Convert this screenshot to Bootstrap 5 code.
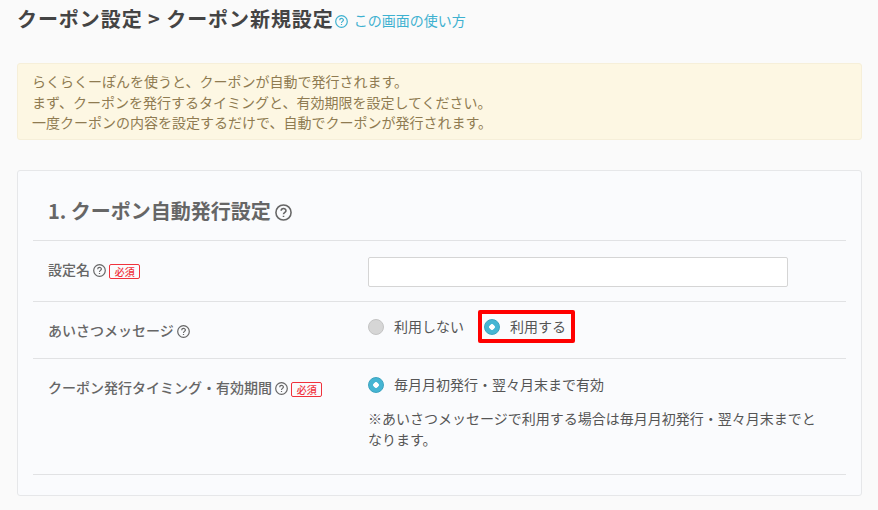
<!DOCTYPE html>
<html lang="ja">
<head>
    <meta charset="UTF-8">
    <title>クーポン設定</title>
    <link href="https://cdn.jsdelivr.net/npm/bootstrap@5.3.0/dist/css/bootstrap.min.css" rel="stylesheet">
    <style>
        html, body { height: 510px; overflow: hidden; }
        body {
            background: #fafafa;
            color: #555;
            font-family: "Noto Sans CJK JP", sans-serif;
            font-size: 14px;
            line-height: 21px;
        }
        .page-wrap { padding: 0 16px 0 17px; }
        .page-head { height: 63px; padding-top: 6px; align-items: flex-start; }
        .page-title { font-size: 20px; line-height: 26px; font-weight: 700; color: #444; letter-spacing: .93px; margin: 0; }
        .help-link { color: #3eb1d0; text-decoration: none; font-size: 14px; line-height: 28px; margin-left: 1px; }
        .help-link svg { margin-right: 6px; vertical-align: -2px; }
        svg { stroke-width: 1.2; }
        .notice-box {
            background: #fdf7e3;
            border: 1px solid #f6efd9;
            border-radius: 3px;
            color: #8f7b51;
            padding: 7px 14px;
            height: 77px;
            margin-bottom: 30px;
            line-height: 20.6px;
        }
        .form-panel {
            background: #fafbfd;
            border: 1px solid #e6e7e9;
            border-radius: 3px;
            padding: 0 15px;
            height: 326px;
        }
        .panel-title { font-size: 20px; line-height: 26px; font-weight: 700; color: #666; margin: 0; padding: 27px 15px 16px; height: 70px; border-bottom: 1px solid #e1e2e4; }
        .form-line { border-bottom: 1px solid #e1e2e4; padding-left: 15px; }
        .line-name { height: 61px; padding-top: 18px; }
        .line-greet { height: 57px; padding-top: 18px; }
        .line-timing { height: 116px; padding-top: 15px; }
        .label-col { width: 320px; flex: none; font-size: 14px; font-weight: 500; color: #666; }
        .line-timing .label-col { padding-top: 3px; }
        .q-icon { color: #666; vertical-align: -2px; }
        .req-tag {
            display: inline-block;
            border: 1px solid #f0323c;
            border-radius: 2px;
            color: #f0323c;
            font-size: 10px;
            line-height: 13px;
            width: 31px;
            text-align: center;
            vertical-align: -1px;
        }
        .name-input { width: 420px; height: 30px; margin-top: -2px; border: 1px solid #d5d5d5; border-radius: 2px; background: #fff; display: block; }
        .radio-dot {
            display: inline-block;
            width: 16px;
            height: 16px;
            border-radius: 50%;
            flex: none;
        }
        .radio-off { background: #d6d6d6; border: 1px solid #c4c4c4; }
        .radio-on { background: radial-gradient(circle, #fff 0 2.5px, #45b5d3 3px); border: 1px solid #3ba3bf; }
        .radio-item { font-size: 14px; color: #555; gap: 10px; }
        .radio-group { margin-top: -10px; }
        .mark-box { border: 4px solid #f00; border-radius: 2px; padding: 0 5px 0 2px; margin-left: 14px; height: 33px; }
        .note-text { font-size: 14px; line-height: 21px; margin: 13px 0 0; width: 450px; color: #555; }
    </style>
</head>
<body>

<div class="page-wrap">
    <div class="d-flex page-head">
        <h1 class="page-title">クーポン設定 &gt; クーポン新規設定</h1>
        <a class="help-link" href="#"><svg width="13" height="13" viewBox="0 0 13 13" fill="none" stroke="currentColor"><circle cx="6.5" cy="6.5" r="5.8"/><path d="M4.7 5.2c0-2.3 3.7-2.3 3.7-.1 0 1.3-1.9 1.3-1.9 2.8M6.5 9v1"/></svg>この画面の使い方</a>
    </div>

    <div class="notice-box">
        らくらくーぽんを使うと、クーポンが自動で発行されます。<br>
        まず、クーポンを発行するタイミングと、有効期限を設定してください。<br>
        一度クーポンの内容を設定するだけで、自動でクーポンが発行されます。
    </div>

    <div class="form-panel">
        <h2 class="panel-title">1. クーポン自動発行設定
            <svg class="q-icon" width="17" height="17" viewBox="0 0 13 13" fill="none" stroke="currentColor"><circle cx="6.5" cy="6.5" r="5.8"/><path d="M4.7 5.2c0-2.3 3.7-2.3 3.7-.1 0 1.3-1.9 1.3-1.9 2.8M6.5 9v1"/></svg>
        </h2>

        <div class="form-line line-name d-flex">
            <div class="label-col">設定名
                <svg class="q-icon" width="13" height="13" viewBox="0 0 13 13" fill="none" stroke="currentColor"><circle cx="6.5" cy="6.5" r="5.8"/><path d="M4.7 5.2c0-2.3 3.7-2.3 3.7-.1 0 1.3-1.9 1.3-1.9 2.8M6.5 9v1"/></svg>
                <span class="req-tag">必須</span>
            </div>
            <input type="text" class="name-input">
        </div>

        <div class="form-line line-greet d-flex">
            <div class="label-col">あいさつメッセージ
                <svg class="q-icon" width="13" height="13" viewBox="0 0 13 13" fill="none" stroke="currentColor"><circle cx="6.5" cy="6.5" r="5.8"/><path d="M4.7 5.2c0-2.3 3.7-2.3 3.7-.1 0 1.3-1.9 1.3-1.9 2.8M6.5 9v1"/></svg>
            </div>
            <div class="radio-group d-flex align-items-center align-self-start">
                <label class="radio-item d-flex align-items-center"><span class="radio-dot radio-off"></span>利用しない</label>
                <label class="radio-item mark-box d-flex align-items-center"><span class="radio-dot radio-on"></span>利用する</label>
            </div>
        </div>

        <div class="form-line line-timing d-flex">
            <div class="label-col">クーポン発行タイミング・有効期間
                <svg class="q-icon" width="13" height="13" viewBox="0 0 13 13" fill="none" stroke="currentColor"><circle cx="6.5" cy="6.5" r="5.8"/><path d="M4.7 5.2c0-2.3 3.7-2.3 3.7-.1 0 1.3-1.9 1.3-1.9 2.8M6.5 9v1"/></svg>
                <span class="req-tag">必須</span>
            </div>
            <div>
                <label class="radio-item d-flex align-items-center"><span class="radio-dot radio-on"></span>毎月月初発行・翌々月末まで有効</label>
                <p class="note-text">※あいさつメッセージで利用する場合は毎月月初発行・翌々月末までとなります。</p>
            </div>
        </div>
    </div>
</div>

<script src="https://cdn.jsdelivr.net/npm/bootstrap@5.3.0/dist/js/bootstrap.bundle.min.js"></script>
</body>
</html>
